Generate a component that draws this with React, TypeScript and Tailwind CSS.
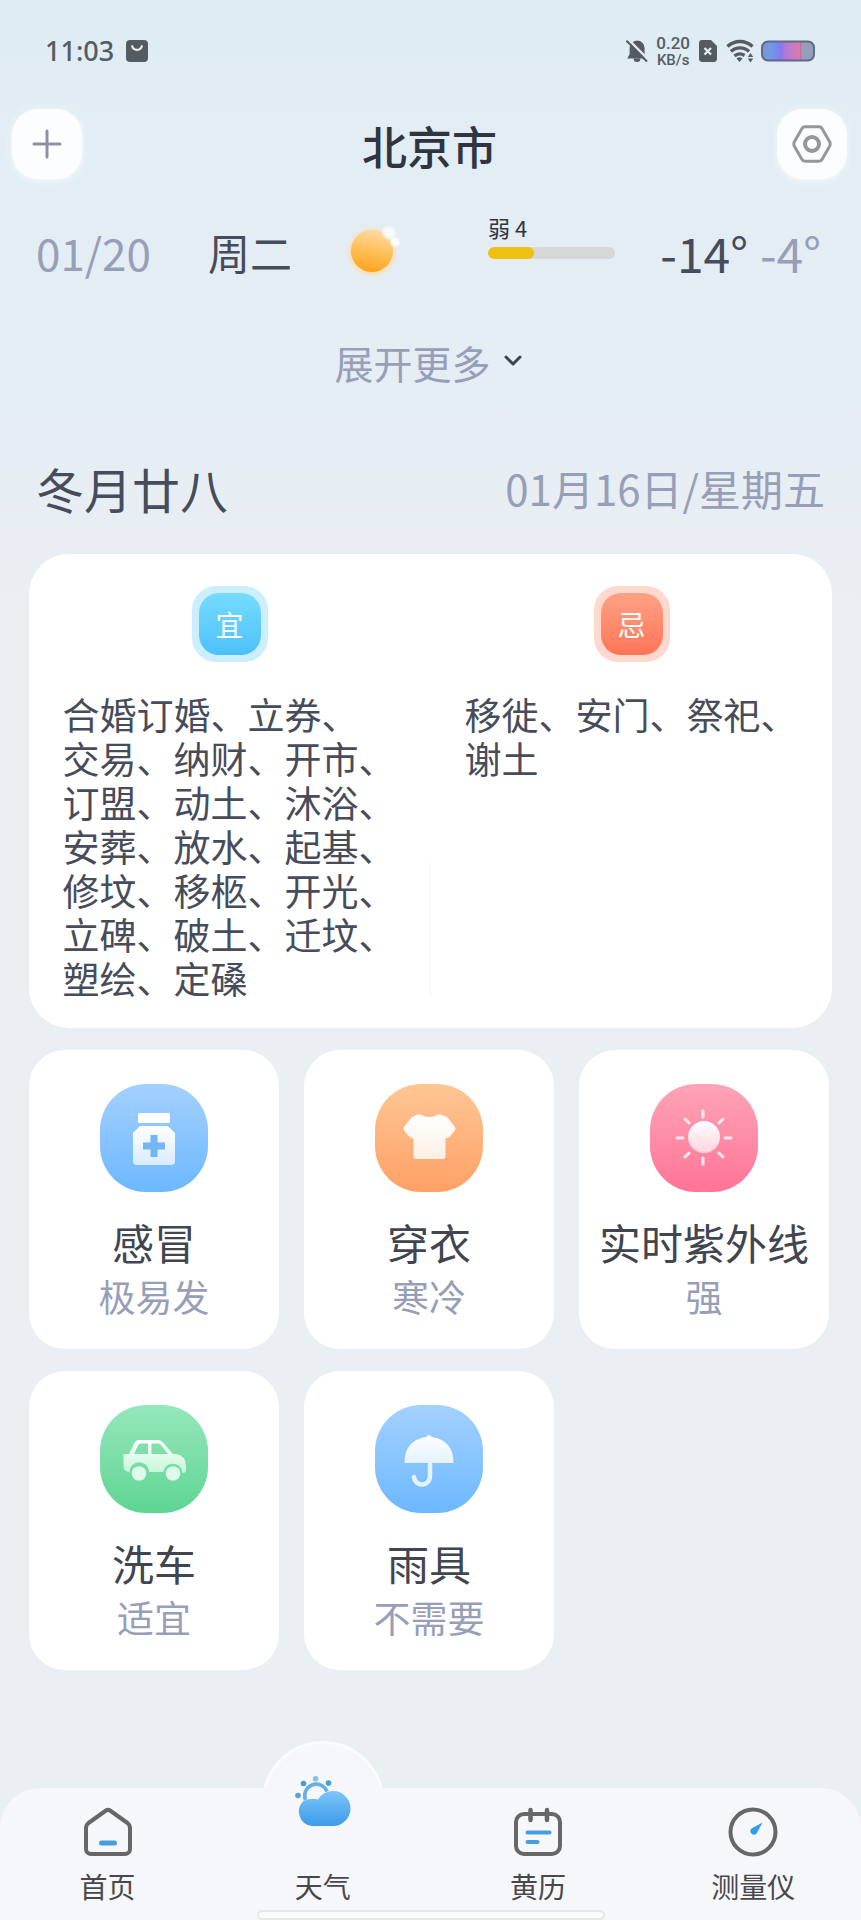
import React from "react";

const suitable =
  "合婚订婚、立券、交易、纳财、开市、订盟、动土、沐浴、安葬、放水、起基、修坟、移柩、开光、立碑、破土、迁坟、塑绘、定磉";
const avoid = "移徙、安门、祭祀、谢土";

function StatusBar() {
  return (
    <div className="flex h-[102px] items-center justify-between pr-[46px] pl-[45px] text-[#555c61]">
      <div className="flex items-center gap-3">
        <span className="font-['Noto_Sans','Noto_Sans_CJK_SC',sans-serif] text-[27px] leading-8 font-medium">11:03</span>
        <svg width="22" height="22" viewBox="0 0 22 22" aria-hidden="true">
          <rect width="22" height="22" rx="4" fill="#555c61" />
          <path d="M6.200 6.200a5 5 0 0 0 9.600 0" fill="none" stroke="#e9f1f6" strokeWidth="2.200" strokeLinecap="round" />
        </svg>
      </div>
      <div className="flex items-center">
        <svg width="22" height="24" viewBox="0 0 22 24" aria-hidden="true">
          <path d="M11 1.500a7.600 7.600 0 0 1 7.600 7.800v6l2.200 4.200H1.200l2.400-4.200v-6A7.600 7.600 0 0 1 11 1.500z" fill="#555c61" />
          <path d="M7.600 19.500h6.800a3.400 3.500 0 0 1-6.800 0z" fill="#555c61" />
          <path d="M2.600 0.800 22 20.300" stroke="#e0ecf4" strokeWidth="2.400" />
          <path d="M1 2.200 20.400 22" stroke="#555c61" strokeWidth="2" strokeLinecap="round" />
        </svg>
        <div className="ml-2 flex flex-col items-center font-['Roboto',sans-serif] font-medium">
          <span className="text-[17px] leading-[18px]">0.20</span>
          <span className="text-[15px] leading-4">KB/s</span>
        </div>
        <svg className="ml-2" width="20" height="24" viewBox="0 0 20 24" aria-hidden="true">
          <path d="M4 1h9l6 6v12.500a3.500 3.500 0 0 1-3.500 3.500h-11A3.500 3.500 0 0 1 1 19.500V4a3 3 0 0 1 3-3z" fill="#555c61" />
          <path d="m6.500 9 6.500 6.500M13 9l-6.500 6.500" stroke="#e9f1f6" strokeWidth="2.200" />
        </svg>
        <svg className="ml-2" width="28" height="24" viewBox="0 0 28 24" fill="none" stroke="#555c61" strokeWidth="3.400" aria-hidden="true">
          <path d="M1.500 7.500a18 18 0 0 1 25 0" />
          <path d="M5 12.500a13 13 0 0 1 18 0" />
          <path d="M8.500 17a8 8 0 0 1 10-.5" />
          <path d="M10.500 19.500a4.800 4.800 0 0 1 6 0l-3 3.500z" fill="#555c61" stroke="none" />
          <path d="m24.500 14 2.700 4h-5.400zM24.500 23.500l2.700-4h-5.400z" fill="#555c61" stroke="none" />
        </svg>
        <svg className="ml-[7px]" width="54" height="22" viewBox="0 0 54 22" aria-hidden="true">
          <defs>
            <linearGradient id="battery">
              <stop offset="0" stopColor="#7c96c8" />
              <stop offset=".15" stopColor="#6f9be8" />
              <stop offset=".37" stopColor="#8579ee" />
              <stop offset=".46" stopColor="#b27bd2" />
              <stop offset=".72" stopColor="#dd78b0" />
              <stop offset=".74" stopColor="#c27396" />
              <stop offset=".77" stopColor="#9a9cc0" />
              <stop offset="1" stopColor="#8f9fb8" />
            </linearGradient>
          </defs>
          <rect x="1" y="1.500" width="52" height="19" rx="6" fill="url(#battery)" stroke="#626889" strokeWidth="2" />
        </svg>
      </div>
    </div>
  );
}

function Header() {
  const button =
    "flex size-[70px] cursor-pointer items-center justify-center rounded-[26px] bg-[#fcfdff] shadow-[0_1px_8px_rgba(255,255,255,0.8)]";
  return (
    <header className="flex items-center justify-between pt-[7px] pr-3.5 pl-3">
      <button type="button" aria-label="添加城市" className={button}>
        <svg width="30" height="30" viewBox="0 0 30 30" stroke="#938fa3" strokeWidth="3" strokeLinecap="round" aria-hidden="true">
          <path d="M15 2v26M2 15h26" />
        </svg>
      </button>
      <h1 className="pt-1 text-[45px] leading-[60px] font-medium text-[#2e3440]">北京市</h1>
      <button type="button" aria-label="设置" className={button}>
        <svg width="40" height="38" viewBox="0 0 40 38" fill="none" stroke="#96969c" strokeWidth="3" strokeLinejoin="round" aria-hidden="true">
          <path d="M13 1.800h14q2 0 3 1.700l7.600 13.200q1.200 2.300 0 4.600L30 34.500q-1 1.700-3 1.700H13q-2 0-3-1.700L2.400 21.300q-1.200-2.300 0-4.600L10 3.500q1-1.700 3-1.700z" />
          <circle cx="20" cy="19" r="7" strokeWidth="4" />
        </svg>
      </button>
    </header>
  );
}

function Forecast() {
  return (
    <section className="pt-[31px] pr-10 pl-9">
      <div className="grid h-[84px] grid-cols-[172px_92px_188px_1fr_auto] items-center text-[44px] leading-[60px]">
        <span className="text-[#979fb8]">01/20</span>
        <span className="text-[42px] text-[#464c5c]">周二</span>
        <svg className="ml-[21px]" width="90" height="72" viewBox="0 0 90 72" role="img" aria-label="晴">
          <defs>
            <linearGradient id="sun" x1=".6" y1="0" x2=".4" y2="1">
              <stop offset="0" stopColor="#ffd9a0" />
              <stop offset=".5" stopColor="#ffc05a" />
              <stop offset="1" stopColor="#ffa31c" />
            </linearGradient>
            <radialGradient id="glow">
              <stop offset=".7" stopColor="#ffd28a" stopOpacity=".75" />
              <stop offset="1" stopColor="#ffe3b8" stopOpacity="0" />
            </radialGradient>
            <radialGradient id="spark">
              <stop offset="0" stopColor="#fff" />
              <stop offset=".6" stopColor="#fff" stopOpacity=".7" />
              <stop offset="1" stopColor="#fff" stopOpacity="0" />
            </radialGradient>
          </defs>
          <circle cx="51" cy="36" r="27" fill="url(#glow)" />
          <circle cx="51" cy="35" r="21" fill="url(#sun)" />
          <circle cx="68" cy="17" r="8" fill="url(#spark)" />
          <circle cx="74" cy="26" r="6" fill="url(#spark)" />
        </svg>
        <div className="flex flex-col gap-2 pb-[30px]">
          <span className="text-[22px] leading-6 text-[#2e3440]">弱 4</span>
          <div className="h-3 w-[127px] overflow-hidden rounded-md bg-[#d6d7d9]">
            <div className="h-full w-[46px] rounded-md bg-[#efc010]" />
          </div>
        </div>
        <div className="flex gap-3 text-[48px]">
          <span className="text-[#464c5c]">-14°</span>
          <span className="text-[#979fb8]">-4°</span>
        </div>
      </div>
      <div className="flex justify-center pt-10">
        <button type="button" className="flex cursor-pointer items-center gap-3 text-[39px] leading-[56px] text-[#979fb8]">
          展开更多
          <svg width="20" height="14" viewBox="0 0 20 14" fill="none" stroke="#3c4250" strokeWidth="3" strokeLinecap="round" strokeLinejoin="round" aria-hidden="true">
            <path d="m3 2 7 7 7-7" />
          </svg>
        </button>
      </div>
    </section>
  );
}

function Terms({ text }: { text: string }) {
  return <p className="mt-[30px] w-[334px] text-[37px] leading-[44px] break-keep text-[#474c5b]">{text}</p>;
}

function Almanac() {
  return (
    <section className="mx-[29px] mt-8 flex rounded-[40px] bg-white pt-8 pb-7">
      <div className="flex flex-1 flex-col items-center">
        <div className="rounded-3xl bg-[#cdeefe] p-[7px]">
          <h3 className="flex size-[62px] items-center justify-center rounded-[20px] bg-gradient-to-b from-[#76dcff] to-[#4cc0fb] text-[28px] leading-8 text-white">宜</h3>
        </div>
        <Terms text={suitable} />
      </div>
      <div className="mb-1 h-[134px] w-px self-end bg-[#f3f4f6]" />
      <div className="flex flex-1 flex-col items-center">
        <div className="rounded-3xl bg-[#ffd9ce] p-[7px]">
          <h3 className="flex size-[62px] items-center justify-center rounded-[20px] bg-gradient-to-b from-[#ffa184] to-[#ff7457] text-[28px] leading-8 text-white">忌</h3>
        </div>
        <Terms text={avoid} />
      </div>
    </section>
  );
}

const medicine = (
  <>
    <rect x="38" y="29" width="32" height="10" rx="1.500" fill="#fff" />
    <path d="M40 42h28l7 7v28a4 4 0 0 1-4 4H37a4 4 0 0 1-4-4V49z" fill="url(#white-blue)" />
    <path d="M54 51v22M43 62h22" stroke="#74b5f4" strokeWidth="7" />
  </>
);
const shirt = (
  <path d="M41 31q3-1.500 5 0 8 4 16 0 2-1.500 5 0l5 2 8 10q1 2-.5 4l-5 6q-1.500 1.500-4 1V72a3 3 0 0 1-3 3h-26a3 3 0 0 1-3-3V54q-2.500.5-4-1l-5-6q-1.500-2-.5-4l8-10z" fill="url(#white-orange)" />
);
const uv = (
  <>
    <circle cx="54" cy="53" r="16" fill="url(#white-pink)" />
    <path d="M53 27v6M53 74v6M27 54h6M75 54h6M35 35l4 4M73 35l-4 4M35 73l4-4M73 73l-4-4" stroke="#ffe9f0" strokeWidth="3" strokeLinecap="round" />
  </>
);
const car = (
  <>
    <path
      fillRule="evenodd"
      d="M24.500 49H29l5.500-11q1.500-3 4.500-3h19q3 0 5 2.500L73 49h3q10 1.500 10 12v4q0 3-3 3h-.5a9.700 9.700 0 0 0-19.300-1H49a9.700 9.700 0 0 0-19.500 0q-6-.5-6-6V50q0-1 1-1zM34 49h14V38.500h-7q-2 0-3 2zM51.500 49H68l-7-9q-1.200-1.500-3-1.500h-6.500z"
      fill="url(#white-green)"
    />
    <circle cx="39" cy="68.500" r="7.300" fill="#dcfbe8" />
    <circle cx="73" cy="68.500" r="7.300" fill="#dcfbe8" />
  </>
);
const umbrella = (
  <>
    <path d="M29.500 58q0-23 22-26a2.600 2.600 0 0 1 5 0q22 3 22 26z" fill="url(#white-sky)" />
    <path d="M55 58v13a8 8 0 0 1-16 1" fill="none" stroke="#e6f3ff" strokeWidth="4.500" strokeLinecap="round" />
  </>
);

const cards = [
  { title: "感冒", value: "极易发", tile: "bg-gradient-to-b from-[#a3d1ff] to-[#6cb8ff]", icon: medicine },
  { title: "穿衣", value: "寒冷", tile: "bg-gradient-to-b from-[#ffc694] to-[#ffa065]", icon: shirt },
  { title: "实时紫外线", value: "强", tile: "bg-gradient-to-b from-[#ffa3b7] to-[#ff7496]", icon: uv },
  { title: "洗车", value: "适宜", tile: "bg-gradient-to-b from-[#95e7bc] to-[#5dd592]", icon: car },
  { title: "雨具", value: "不需要", tile: "bg-gradient-to-b from-[#a3d1ff] to-[#6cb8ff]", icon: umbrella },
];

function Gradient({ id, to }: { id: string; to: string }) {
  return (
    <linearGradient id={id} x1="0" y1="0" x2="0" y2="1">
      <stop offset="0" stopColor="#fff" />
      <stop offset="1" stopColor={to} />
    </linearGradient>
  );
}

function LifeIndex() {
  return (
    <section className="mt-[22px] grid grid-cols-3 gap-x-[25px] gap-y-[22px] pr-8 pl-[29px]">
      {cards.map((c) => (
        <article key={c.title} className="flex flex-col items-center rounded-[36px] bg-white pt-[34px] pb-7">
          <div className={`size-[108px] rounded-[46px] ${c.tile}`}>
            <svg className="size-full" viewBox="0 0 108 108" aria-hidden="true">
              <defs>
                <Gradient id="white-blue" to="#d8ecff" />
                <Gradient id="white-orange" to="#fff0e4" />
                <Gradient id="white-pink" to="#ffd3e0" />
                <Gradient id="white-green" to="#c4f6d9" />
                <Gradient id="white-sky" to="#e4f2ff" />
              </defs>
              {c.icon}
            </svg>
          </div>
          <h3 className="mt-5 text-[42px] leading-[60px] whitespace-nowrap text-[#41454f]">{c.title}</h3>
          <p className="text-[37px] leading-[49px] text-[#979fb8]">{c.value}</p>
        </article>
      ))}
    </section>
  );
}

const line = { fill: "none", stroke: "#67676a", strokeWidth: 4, strokeLinecap: "round", strokeLinejoin: "round" } as const;

const tabs = [
  {
    label: "首页",
    icon: (
      <svg width="50" height="50" viewBox="0 0 50 50" {...line} aria-hidden="true">
        <path d="M23 3.500q2-1.300 4 0L44.500 16q2.500 2 2.500 5v21a5 5 0 0 1-5 5H8a5 5 0 0 1-5-5V21q0-3 2.500-5z" />
        <path d="M18.500 36h13" stroke="#459fdd" strokeWidth="5" />
      </svg>
    ),
  },
  {
    label: "天气",
    icon: (
      <svg className="mb-[62px]" width="56" height="52" viewBox="0 0 56 52" aria-hidden="true">
        <defs>
          <linearGradient id="cloud" x1="0" y1="0" x2="0" y2="1">
            <stop offset="0" stopColor="#7cc6f9" />
            <stop offset="1" stopColor="#3c9be9" />
          </linearGradient>
        </defs>
        <path d="M10.500 25a11.500 11.500 0 0 1 21.500-8.500" fill="none" stroke="#66b0e4" strokeWidth="3.600" />
        <path d="M17 51a14.500 14.500 0 0 1-8.500-25q8-3.500 14.500-1.500 5-8.500 15-8.500a17.500 17.500 0 0 1 0 35z" fill="url(#cloud)" />
        <circle cx="8.500" cy="8.500" r="2.800" fill="#459fdd" />
        <circle cx="20.600" cy="3.800" r="2.800" fill="#86c4e8" />
        <circle cx="33.500" cy="8" r="2.800" fill="#459fdd" />
        <circle cx="3" cy="20.500" r="2.800" fill="#5f9fdd" />
      </svg>
    ),
  },
  {
    label: "黄历",
    icon: (
      <svg width="50" height="50" viewBox="0 0 50 50" {...line} aria-hidden="true">
        <rect x="3" y="7" width="44" height="40" rx="8" />
        <path d="M17.500 3v10M34 3v10" strokeWidth="4.500" />
        <path d="M14.500 25.500h22M14.500 35h10" stroke="#459fdd" />
      </svg>
    ),
  },
  {
    label: "测量仪",
    icon: (
      <svg width="50" height="50" viewBox="0 0 50 50" {...line} aria-hidden="true">
        <circle cx="25" cy="25" r="22.500" />
        <path d="m34.500 15.500-6 11a3.500 3.500 0 1 1-5-5z" fill="#2f9eec" stroke="none" />
      </svg>
    ),
  },
];

function TabBar() {
  return (
    <nav className="relative mt-auto rounded-t-[40px] bg-[#f5f7fa] pt-[19px]">
      <div className="absolute inset-x-0 -top-[47px] grid h-[47px] grid-cols-4 overflow-hidden">
        <div className="col-start-2 size-[122px] justify-self-center rounded-full border-[3px] border-[#f9fbfd] bg-[#f5f7fa]" />
      </div>
      <div className="relative grid grid-cols-4">
        {tabs.map((t) => (
          <a key={t.label} href="#" className="flex flex-col items-center text-[28px] leading-9 text-[#48484b]">
            <span className="flex h-[50px] items-center">{t.icon}</span>
            <span className="mt-[11px]">{t.label}</span>
          </a>
        ))}
      </div>
      <div className="mx-auto mt-1.5 h-2.5 w-[348px] rounded-full border-2 border-[#e5e7ea] bg-[#fafbfd]" />
    </nav>
  );
}

export default function App() {
  return (
    <div className="flex min-h-screen flex-col bg-[linear-gradient(to_bottom,#dfecf4_0px,#e5edf4_280px,#e6edf4_440px,#eaeff2_620px)] font-['Noto_Sans_CJK_SC',sans-serif]">
      <StatusBar />
      <Header />
      <main className="pb-10">
        <Forecast />
        <div className="flex items-center justify-between pt-[64px] pr-9 pl-9">
          <h2 className="text-[48px] leading-[68px] text-[#464c5c]">冬月廿八</h2>
          <span className="text-[42px] leading-[60px] text-[#979fb8]">01月16日/星期五</span>
        </div>
        <Almanac />
        <LifeIndex />
      </main>
      <TabBar />
    </div>
  );
}
